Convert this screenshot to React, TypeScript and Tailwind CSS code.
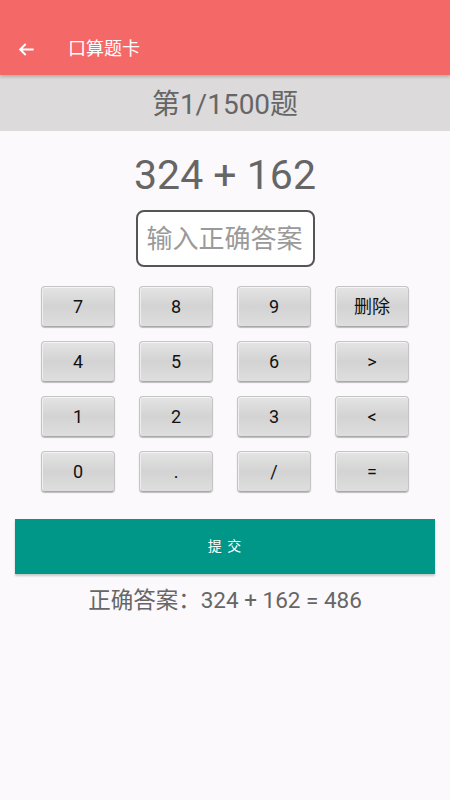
import React from 'react';

const keys = ['7', '8', '9', '删除', '4', '5', '6', '>', '1', '2', '3', '<', '0', '.', '/', '='];

function Key({ label }: { label: string }) {
  return (
    <button
      type="button"
      className="h-[41px] w-[74px] rounded-[4px] border border-[#c4c4c4] border-b-[#a9a9a9] bg-gradient-to-b from-[#e4e4e4] via-[#d3d3d3] to-[#dedede] text-[18px] text-[#111] shadow-[inset_0_1px_0_#f4f4f4,inset_1px_0_0_#eeeeee,0_1px_1px_rgba(0,0,0,0.25)]"
    >
      {label}
    </button>
  );
}

export default function App() {
  return (
    <div
      className="flex min-h-[800px] w-full flex-col bg-[#fbf9fb]"
      style={{ fontFamily: 'Roboto, "Noto Sans CJK SC", sans-serif' }}
    >
      <header className="relative z-10 flex h-[75px] items-end bg-[#f46868] pb-[14px] shadow-[0_2px_3px_rgba(0,0,0,0.2)]">
        <svg className="mb-[2px] ml-[17px] h-[19px] w-[19px]" viewBox="0 0 24 24" fill="none" stroke="white" strokeWidth="2.4">
          <path d="M21 12H4M11 5l-7 7 7 7" />
        </svg>
        <h1 className="ml-[32px] text-[18px] leading-[24px] text-white">口算题卡</h1>
      </header>

      <div className="flex h-[56px] items-center justify-center bg-[#dcdadb] pt-[4px] text-[28px] text-[#666]">
        第1/1500题
      </div>

      <div className="mt-[21px] text-center text-[41px] leading-[47px] text-[#666]">324 + 162</div>

      <div className="mt-[11px] flex justify-center">
        <input
          placeholder="输入正确答案"
          className="h-[57px] w-[179px] rounded-[8px] border-2 border-[#555] bg-white px-[9px] text-[26px] text-[#333] placeholder:text-[#9a9a9a] focus:outline-none"
        />
      </div>

      <div className="mx-auto mt-[19px] grid grid-cols-4 gap-x-[24px] gap-y-[14px]">
        {keys.map((k) => (
          <Key key={k} label={k} />
        ))}
      </div>

      <div className="mt-[27px] px-[15px]">
        <button
          type="button"
          className="h-[55px] w-full bg-[#009688] text-[14px] tracking-[1px] text-white shadow-[0_2px_2px_rgba(0,0,0,0.2)]"
        >
          提 交
        </button>
      </div>

      <p className="mt-[10px] text-center text-[22.5px] text-[#666]">正确答案：324 + 162 = 486</p>
    </div>
  );
}
